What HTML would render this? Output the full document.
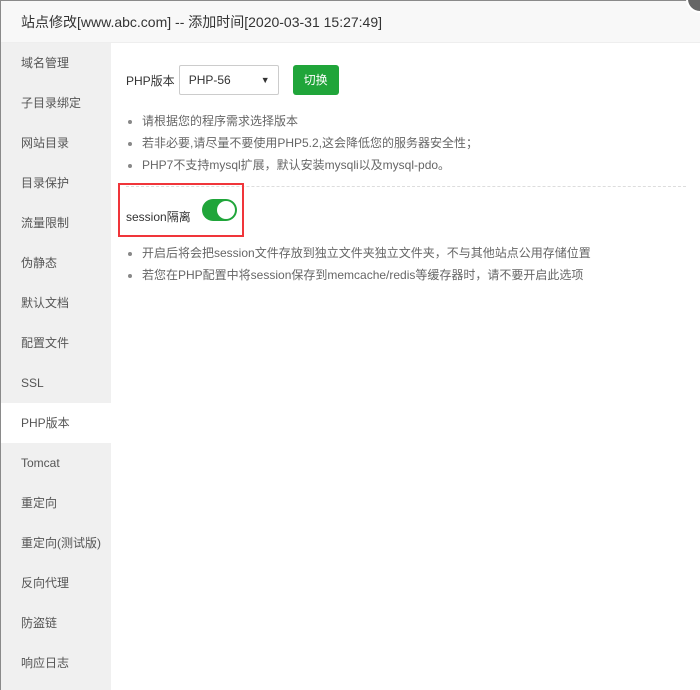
<!DOCTYPE html>
<html><head><meta charset="utf-8"><style>
*{margin:0;padding:0;box-sizing:border-box}
body{width:700px;height:690px;overflow:hidden;background:#fff;font-family:"Liberation Sans","Noto Sans CJK SC",sans-serif;font-size:12px;color:#333;position:relative}
.frame{position:absolute;left:0;top:0;width:700px;height:690px;border-top:1px solid #8a8a8a;border-left:1px solid #8a8a8a}
.hd{position:absolute;left:1px;top:1px;right:0;height:42px;background:#f8f8f8;border-bottom:1px solid #eee;font-size:14px;line-height:42px;padding-left:20px;color:#333}
.close{position:absolute;right:-14px;top:-16px;width:28px;height:28px;border-radius:50%;background:#666;border:2px solid #fff}
.side{position:absolute;left:1px;top:43px;width:110px;bottom:0;background:#f0f0f0}
.side div{height:40px;line-height:40px;padding-left:20px;font-size:12px;color:#555}
.side .on{background:#fff}
.main{position:absolute;left:126px;top:43px}
.row{position:absolute;top:22px;left:0;display:flex;align-items:center;white-space:nowrap}
.sel{width:100px;height:30px;border:1px solid #ccc;border-radius:2px;margin-left:4px;padding-left:9px;line-height:28px;font-size:12px;position:relative}
.sel:after{content:"▼";position:absolute;right:8px;top:0;font-size:9px}
.btn{margin-left:14px;background:#20a53a;color:#fff;width:46px;height:30px;border-radius:3px;text-align:center;line-height:30px}
ul{list-style:none;position:absolute;left:0;white-space:nowrap}
li{height:22px;line-height:22px;color:#666;padding-left:16px;position:relative}
li:before{content:"";position:absolute;left:2px;top:10px;width:4px;height:4px;border-radius:50%;background:#888}
.dash{position:absolute;left:0;top:143px;width:560px;border-top:1px dashed #ddd}
.redbox{position:absolute;left:-8px;top:140px;width:126px;height:54px;border:2px solid #f0353a}
.sess{position:absolute;left:0;top:165px;font-size:12px;color:#333;white-space:nowrap}
.sw{position:absolute;left:76px;top:156px;width:35px;height:22px;border-radius:11px;background:#20a53a}
.sw:after{content:"";position:absolute;right:2px;top:2px;width:18px;height:18px;border-radius:50%;background:#fff}
</style></head><body>
<div class="frame"></div>
<div class="hd">站点修改[www.abc.com] -- 添加时间[2020-03-31 15:27:49]<div class="close"></div></div>
<div class="side">
<div>域名管理</div><div>子目录绑定</div><div>网站目录</div><div>目录保护</div><div>流量限制</div><div>伪静态</div><div>默认文档</div><div>配置文件</div><div>SSL</div><div class="on">PHP版本</div><div>Tomcat</div><div>重定向</div><div>重定向(测试版)</div><div>反向代理</div><div>防盗链</div><div>响应日志</div>
</div>
<div class="main">
<div class="row">PHP版本<div class="sel">PHP-56</div><div class="btn">切换</div></div>
<ul style="top:67px"><li>请根据您的程序需求选择版本</li><li>若非必要,请尽量不要使用PHP5.2,这会降低您的服务器安全性；</li><li>PHP7不支持mysql扩展，默认安装mysqli以及mysql-pdo。</li></ul>
<div class="dash"></div>
<div class="redbox"></div>
<div class="sess">session隔离</div>
<div class="sw"></div>
<ul style="top:199px"><li>开启后将会把session文件存放到独立文件夹独立文件夹，不与其他站点公用存储位置</li><li>若您在PHP配置中将session保存到memcache/redis等缓存器时，请不要开启此选项</li></ul>
</div>
</body></html>
